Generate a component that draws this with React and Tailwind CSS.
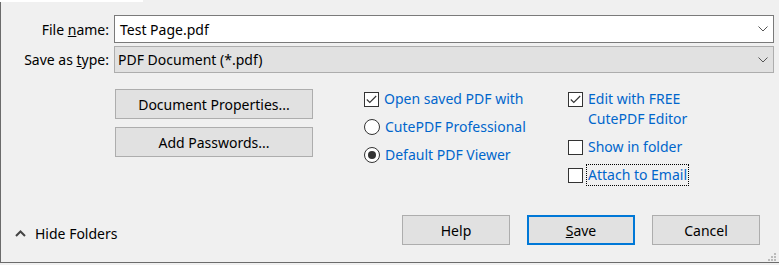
import React from 'react';

const font = { fontFamily: '"Segoe UI", "Noto Sans", sans-serif' };

function ChevronDown() {
  return (
    <svg width="10" height="6" viewBox="0 0 10 6" className="shrink-0">
      <polyline points="0.5,0.5 5,5 9.5,0.5" fill="none" stroke="#555" strokeWidth="1" />
    </svg>
  );
}

function Checkbox({ checked }) {
  return (
    <span className="w-[15px] h-[15px] border border-[#333] bg-white shrink-0 flex items-center justify-center">
      {checked && (
        <svg width="11" height="9" viewBox="0 0 11 9">
          <polyline points="0.8,4.5 3.8,7.5 10.2,1" fill="none" stroke="#333" strokeWidth="1.1" />
        </svg>
      )}
    </span>
  );
}

function Radio({ checked }) {
  return (
    <span className="w-[16px] h-[16px] rounded-full border border-[#333] bg-white shrink-0 flex items-center justify-center">
      {checked && <span className="w-[8px] h-[8px] rounded-full bg-[#333]" />}
    </span>
  );
}

function Option({ control, children, focused }) {
  return (
    <div className="flex items-start gap-[5px]">
      <span className="h-[20px] flex items-center">{control}</span>
      <span
        className={
          'text-[#0066cc] leading-[20px] ' +
          (focused ? 'outline outline-1 outline-dotted outline-black -ml-[1px] pl-[1px] pr-[1px]' : '')
        }
      >
        {children}
      </span>
    </div>
  );
}

function Button({ children, primary, className = '' }) {
  return (
    <div
      className={
        'h-[30px] flex items-center justify-center bg-[#e1e1e1] text-black ' +
        (primary ? 'border-2 border-[#0078d7] ' : 'border border-[#adadad] ') +
        className
      }
    >
      {children}
    </div>
  );
}

export default function App() {
  return (
    <div className="w-[779px] h-[265px] bg-[#f0f0f0] text-[14px] text-black overflow-hidden relative" style={font}>
      <div className="h-[2px] w-[143px] bg-white" />
      <div className="h-[261px] border-l border-b border-[#6b6b6b] flex flex-col">
        {/* name + type fields */}
        <div className="grid grid-cols-[113px_660px] gap-y-[3px] pt-[13px] items-center">
          <div className="text-right pr-[5px]">
            File <u>n</u>ame:
          </div>
          <div className="h-[28px] bg-white border border-[#7a7a7a] flex items-center justify-between pl-[5px] pr-[5px]">
            <span>Test Page.pdf</span>
            <ChevronDown />
          </div>
          <div className="text-right pr-[5px]">
            Save as <u>t</u>ype:
          </div>
          <div className="h-[27px] bg-[#e1e1e1] border border-[#adadad] flex items-center justify-between pl-[3px] pr-[5px]">
            <span>PDF Document (*.pdf)</span>
            <ChevronDown />
          </div>
        </div>

        {/* options */}
        <div className="flex mt-[16px] h-[96px]">
          <div className="ml-[114px] w-[198px] flex flex-col gap-[8px]">
            <Button>Document Properties...</Button>
            <Button>Add Passwords...</Button>
          </div>
          <div className="ml-[51px] w-[204px] flex flex-col gap-[8px]">
            <Option control={<Checkbox checked />}>Open saved PDF with</Option>
            <Option control={<Radio />}>CutePDF Professional</Option>
            <Option control={<Radio checked />}>Default PDF Viewer</Option>
          </div>
          <div className="flex flex-col gap-[8px]">
            <Option control={<Checkbox checked />}>
              Edit with FREE
              <br />
              CutePDF Editor
            </Option>
            <Option control={<Checkbox />}>Show in folder</Option>
            <Option control={<Checkbox />} focused>
              Attach to Email
            </Option>
          </div>
        </div>

        {/* bottom bar */}
        <div className="flex items-start mt-[30px]">
          <div className="flex items-center gap-[9px] ml-[14px] mt-[8px]">
            <svg width="11" height="7" viewBox="0 0 11 7">
              <polyline points="1,6 5.5,1.5 10,6" fill="none" stroke="#444" strokeWidth="2" />
            </svg>
            <span>Hide Folders</span>
          </div>
          <div className="ml-auto mr-[19px] flex gap-[17px]">
            <Button className="w-[108px]">Help</Button>
            <Button primary className="w-[108px]">
              <u>S</u>ave
            </Button>
            <Button className="w-[108px]">Cancel</Button>
          </div>
        </div>
      </div>

      {/* resize grip */}
      <svg width="10" height="10" viewBox="0 0 10 10" className="absolute right-[2px] bottom-[3px]">
        <rect x="7" y="1" width="2" height="2" fill="#bbb" />
        <rect x="4" y="4" width="2" height="2" fill="#bbb" />
        <rect x="7" y="4" width="2" height="2" fill="#bbb" />
        <rect x="1" y="7" width="2" height="2" fill="#bbb" />
        <rect x="4" y="7" width="2" height="2" fill="#bbb" />
        <rect x="7" y="7" width="2" height="2" fill="#bbb" />
      </svg>
    </div>
  );
}
